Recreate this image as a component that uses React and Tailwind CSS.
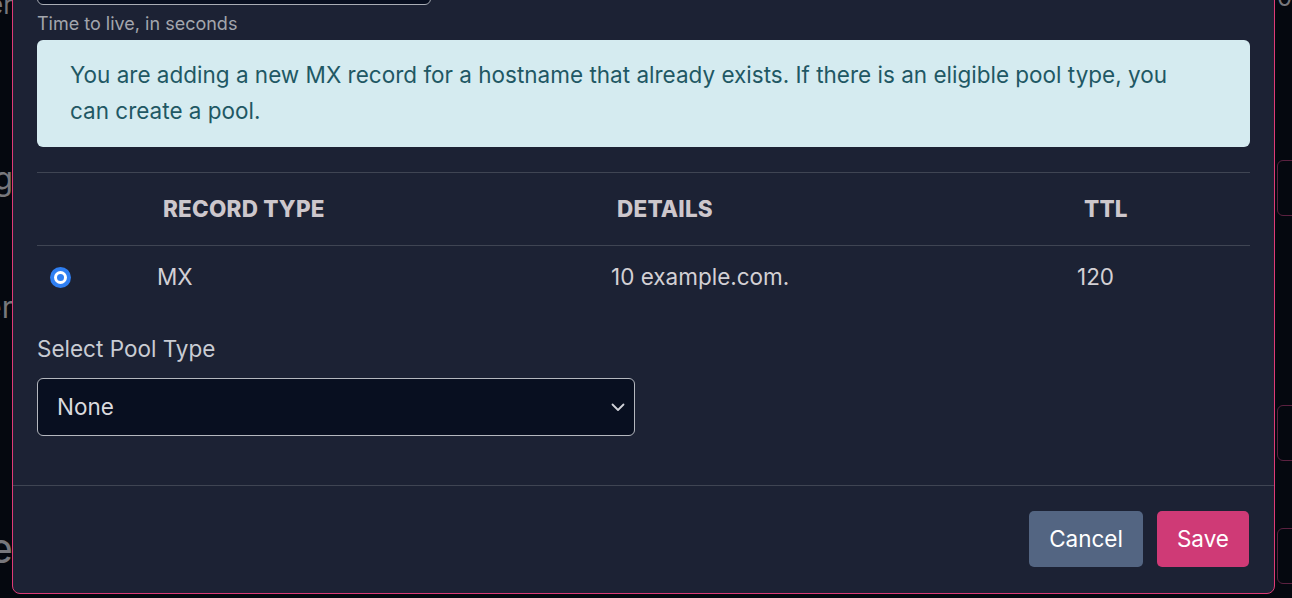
import { useState } from "react";

function Radio({ checked }) {
  return (
    <div className="w-[21px] h-[21px] rounded-full bg-[#2f7ff2] flex items-center justify-center">
      <div className="w-[13px] h-[13px] rounded-full bg-white flex items-center justify-center">
        {checked && <div className="w-[7px] h-[7px] rounded-full bg-[#2f7ff2]"></div>}
      </div>
    </div>
  );
}

function App() {
  const [poolType, setPoolType] = useState("None");

  const records = [{ type: "MX", details: "10 example.com.", ttl: "120" }];

  return (
    <div
      className="relative w-full h-[598px] overflow-hidden bg-[#05080f]"
      style={{ fontFamily: "Inter, 'Noto Sans', sans-serif" }}
    >
      {/* page behind the modal */}
      <div className="absolute inset-0 flex justify-between">
        <div className="w-[40px] flex flex-col items-end pr-[27px] text-[#77777c] leading-none">
          <div className="mt-[-8px] h-[26px] text-[26px]">er</div>
          <div className="mt-[145px] h-[32px] text-[32px]">g</div>
          <div className="mt-[97px] h-[30px] text-[30px]">er</div>
          <div className="mt-[205px] h-[42px] text-[42px]">e</div>
        </div>
        <div className="w-[15px] flex flex-col">
          <div className="mt-[-14px] h-[24px] text-[#77777c] text-[24px] leading-none">0</div>
          <div className="mt-[150px] h-[56px] w-[40px] rounded-l-[6px] border border-[#5b2140]"></div>
          <div className="mt-[189px] h-[56px] w-[40px] rounded-l-[6px] border border-[#5b2140]"></div>
          <div className="mt-[67px] h-[56px] w-[40px] rounded-l-[6px] border border-[#5b2140]"></div>
        </div>
      </div>

      {/* modal */}
      <div className="absolute left-[12px] right-[17px] bottom-[4px] bg-[#1c2234] border border-[#de3a76] rounded-b-[8px]">
        <div className="px-6">
          <div className="w-[394px] h-[57px] rounded-[6px] border border-[#a9adb5] bg-[#080f20]"></div>
          <div className="mt-[7px] text-[18px] leading-[24px] text-[#a3a6ad]">Time to live, in seconds</div>
          <div className="mt-[4px] h-[107px] rounded-[6px] bg-[#d5ebf0] text-[#1f5864] text-[22.5px] leading-[36px] px-[33px] pt-[17px]">
            You are adding a new MX record for a hostname that already exists. If there is an eligible pool type, you
            <br />
            can create a pool.
          </div>

          <div className="mt-[25px] border-t border-[#3f4553]">
            <div className="grid grid-cols-[120px_454px_466px_1fr] h-[73px] items-center border-b border-[#3f4553] text-[22.5px] font-extrabold text-[#cdc7cc] tracking-[0.2px]">
              <div></div>
              <div className="pl-[6px]">RECORD TYPE</div>
              <div className="pl-[6px]">DETAILS</div>
              <div className="pl-[7px]">TTL</div>
            </div>
            {records.map((r) => (
              <div
                key={r.type}
                className="grid grid-cols-[120px_454px_466px_1fr] h-[62px] items-center text-[22.5px] text-[#d3d0d4]"
              >
                <div className="pl-[13px]">
                  <Radio checked />
                </div>
                <div>{r.type}</div>
                <div>{r.details}</div>
                <div>{r.ttl}</div>
              </div>
            ))}
          </div>

          <div className="mt-[25px] text-[22.5px] leading-[32px] text-[#c9ccd3]">Select Pool Type</div>
          <div className="mt-[13px] w-[598px] h-[58px] rounded-[6px] border border-[#b4b7be] bg-[#080f20] flex items-center px-[19px] text-[22.5px] text-[#dadade]">
            <span className="flex-1">{poolType}</span>
            <svg width="14" height="9" viewBox="0 0 14 9" fill="none" className="mr-[-10px]">
              <path d="M1.5 1.5L7 7l5.5-5.5" stroke="#d0d2d8" strokeWidth="1.8" strokeLinecap="round" strokeLinejoin="round" />
            </svg>
          </div>
          <div className="h-[49px]"></div>
        </div>

        <div className="border-t border-[#3f4553] flex justify-end items-center gap-[14px] pt-[25px] pb-[26px] pr-[25px]">
          <button
            type="button"
            className="h-[56px] px-[20px] rounded-[5px] bg-[#536582] text-white text-[22.5px]"
            onClick={() => setPoolType("None")}
          >
            Cancel
          </button>
          <button type="button" className="h-[56px] px-[20px] rounded-[5px] bg-[#cf3a76] text-white text-[22.5px]">
            Save
          </button>
        </div>
      </div>
    </div>
  );
}

export default App;
